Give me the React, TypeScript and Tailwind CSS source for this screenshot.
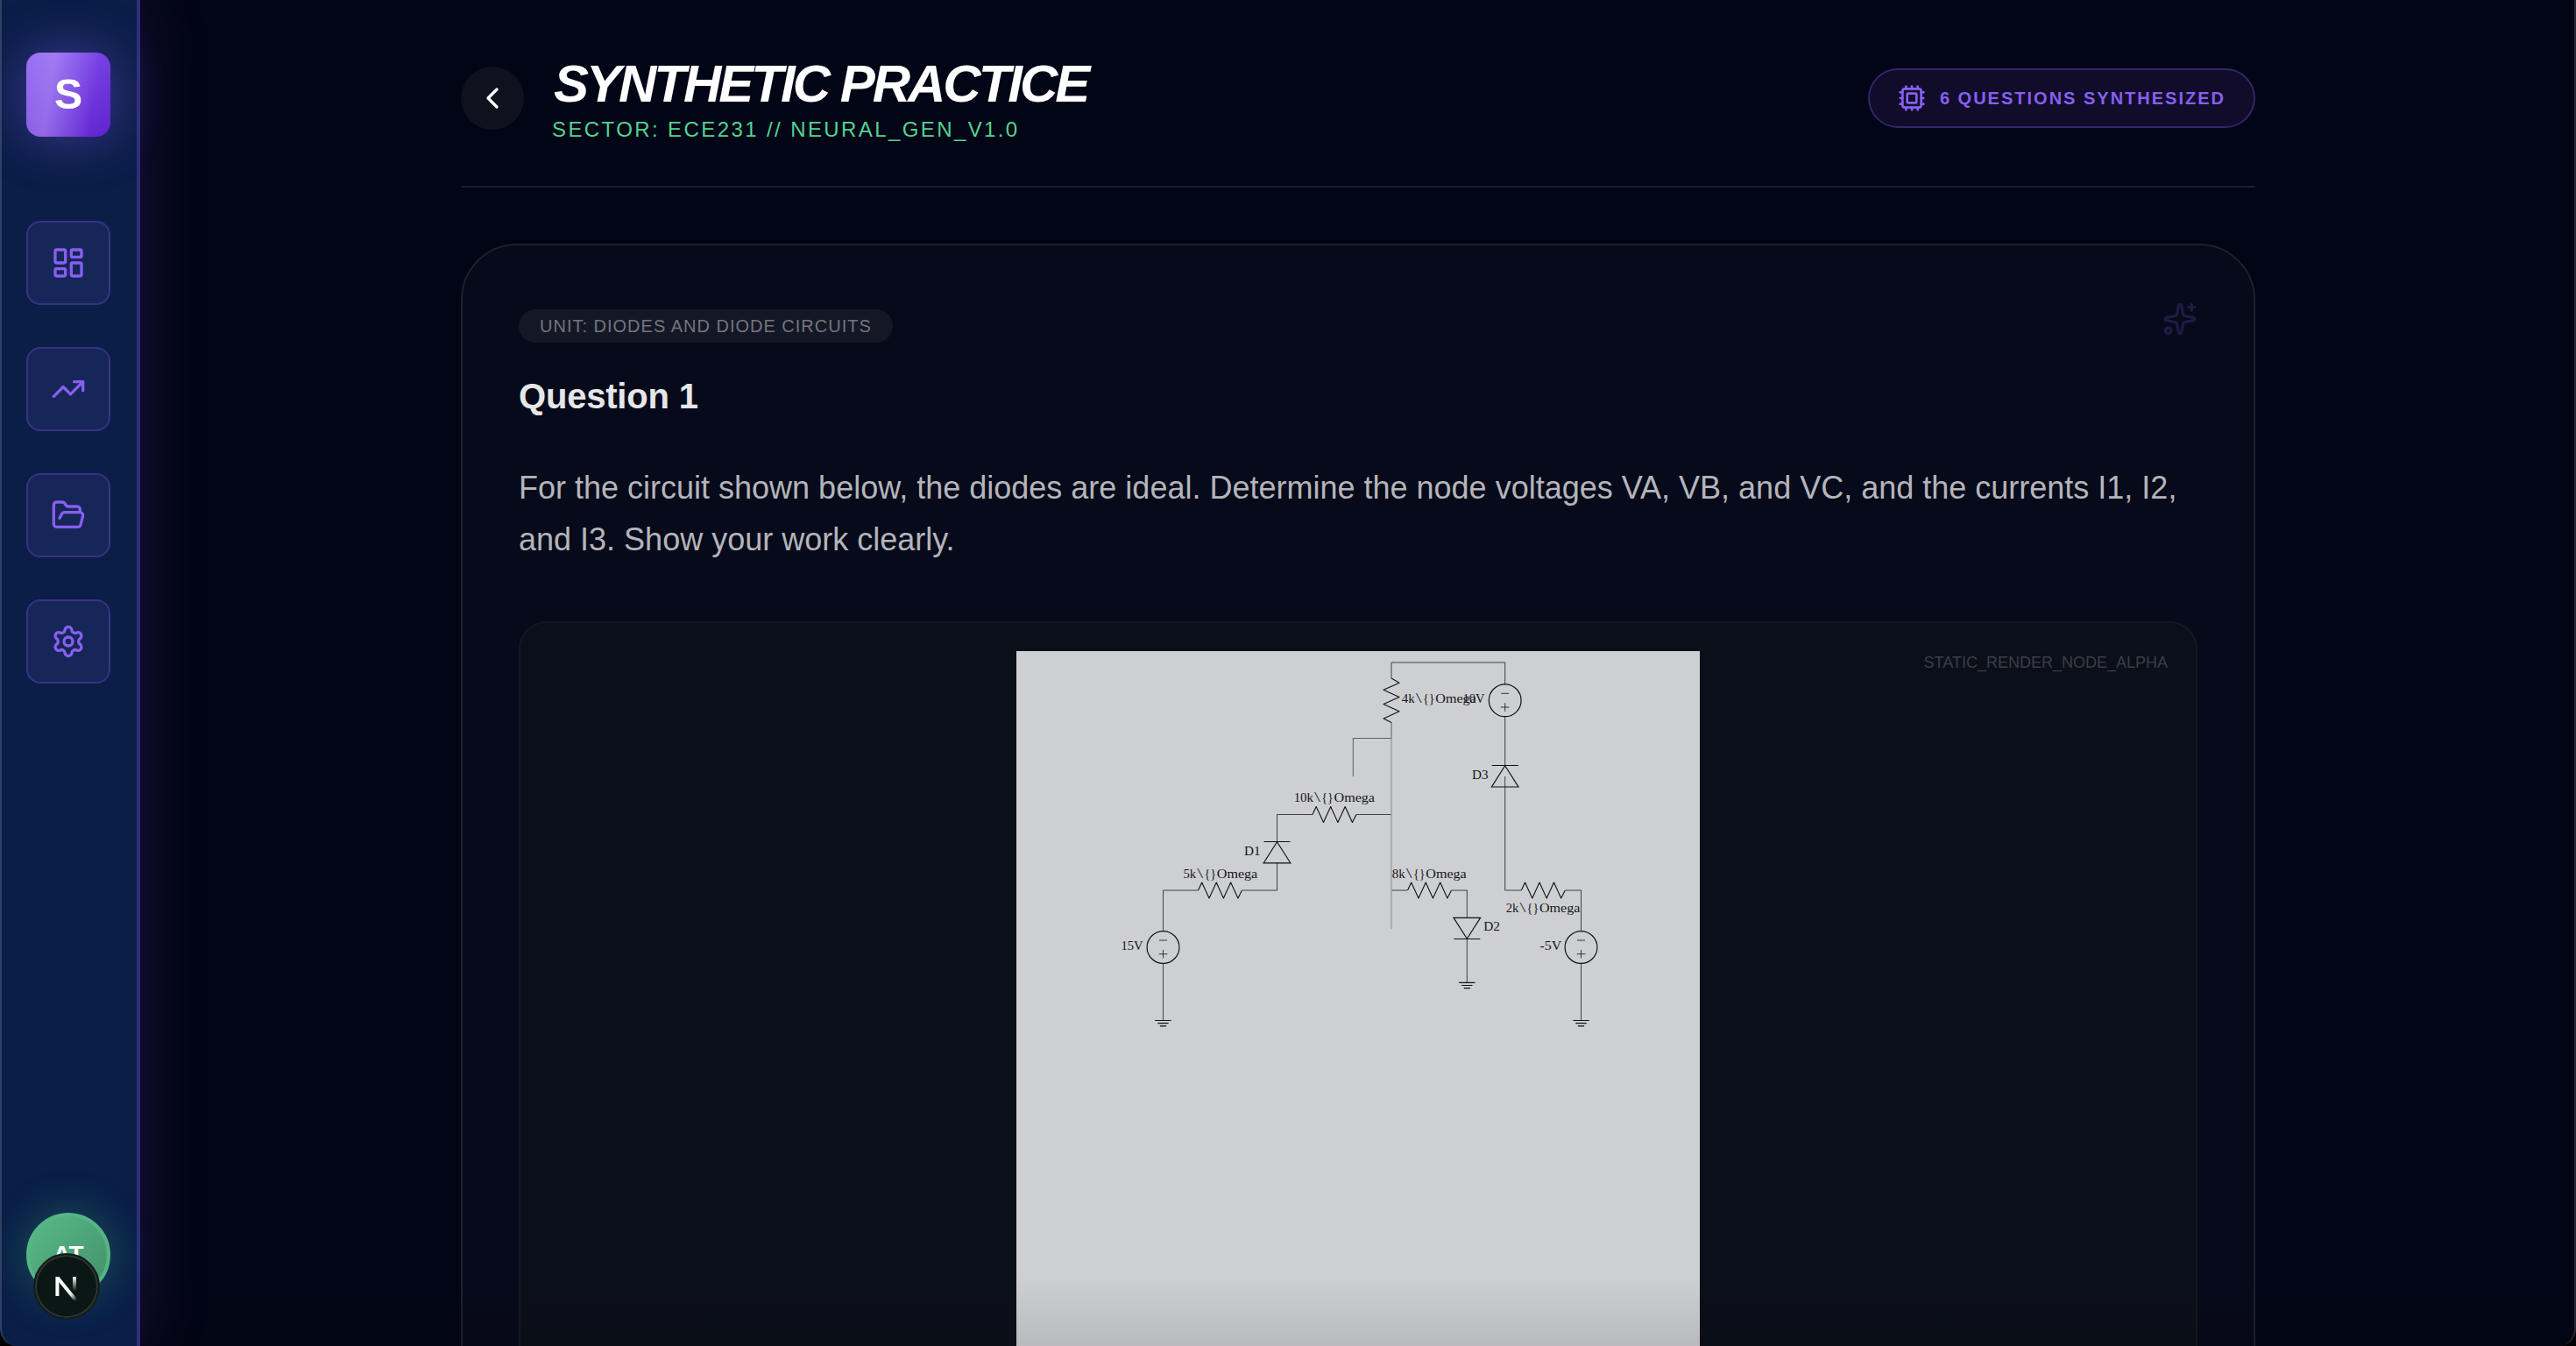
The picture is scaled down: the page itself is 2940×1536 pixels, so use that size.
import React from 'react';
import { ChevronLeft, Cpu, FolderOpen, LayoutDashboard, Settings, Sparkles, TrendingUp } from 'lucide-react';

const navItems = [
  { id: 'dashboard', icon: LayoutDashboard },
  { id: 'progress', icon: TrendingUp },
  { id: 'files', icon: FolderOpen },
  { id: 'settings', icon: Settings },
];

const Sidebar: React.FC = () => (
  <aside className="relative z-10 flex h-full w-40 shrink-0 flex-col items-center border-r-4 border-[#2f2e7d] bg-[#0a1e48] pt-[60px] pb-14 shadow-[0_0_80px_rgba(139,92,246,0.19)]">
    <div className="flex size-24 items-center justify-center rounded-2xl bg-[linear-gradient(98deg,rgba(255,255,255,0.12)_0%,rgba(255,255,255,0.24)_30%,rgba(255,255,255,0)_78%),linear-gradient(135deg,#8b5cf6_0%,#6022cf_100%)] text-5xl font-bold text-white shadow-[0_0_60px_rgba(139,92,246,0.45)]">
      S
    </div>

    <nav className="mt-24 flex flex-col gap-12">
      {navItems.map(({ id, icon: Icon }) => (
        <button key={id} className="flex size-24 items-center justify-center rounded-2xl border-2 border-[#373384] bg-[#162658] text-[#875ff0]">
          <Icon size={40} />
        </button>
      ))}
    </nav>

    <div className="mt-auto flex size-24 items-center justify-center rounded-full border-4 border-[#55b584] bg-[linear-gradient(135deg,#58b988_0%,#429068_100%)] text-[28px] font-bold text-white shadow-[0_0_50px_rgba(74,222,128,0.3)]">
      AT
    </div>
  </aside>
);

const DevBadge: React.FC = () => (
  <div className="absolute bottom-[30px] left-[38px] z-20 flex size-[76px] items-center justify-center rounded-full border-2 border-[#171c1b] bg-[#0b1714] shadow-[inset_0_0_0_2px_#2c3735]">
    <svg width="72" height="72" viewBox="0 0 72 72" fill="none">
      <defs>
        <linearGradient id="badgeDiagonal" x1="37" y1="39" x2="47" y2="52" gradientUnits="userSpaceOnUse">
          <stop stopColor="#fff" />
          <stop offset="0.5" stopColor="#fff" stopOpacity="0.85" />
          <stop offset="1" stopColor="#fff" stopOpacity="0" />
        </linearGradient>
        <linearGradient id="badgeStem" x1="45" y1="25" x2="45" y2="41" gradientUnits="userSpaceOnUse">
          <stop stopColor="#fff" />
          <stop offset="1" stopColor="#fff" stopOpacity="0" />
        </linearGradient>
      </defs>
      <path d="M25.4 25V47" stroke="#fff" strokeWidth="4" />
      <path d="M25.6 26L46.8 52" stroke="url(#badgeDiagonal)" strokeWidth="4" />
      <path d="M45 25V41" stroke="url(#badgeStem)" strokeWidth="4" />
    </svg>
  </div>
);

interface LabelProps {
  x: number;
  y: number;
  width: number;
  children: string;
}

const Label: React.FC<LabelProps> = ({ x, y, width, children }) => (
  <text x={x} y={y} textLength={width} lengthAdjust="spacingAndGlyphs" fill="#161618" fontSize="14.5">
    {children}
  </text>
);

// x is where the unit ends and the unescaped "\{}Omega" begins
const OhmLabel: React.FC<{ x: number; y: number; value: string; width: number }> = ({ x, y, value, width }) => (
  <>
    <Label x={x - width} y={y} width={width}>{value}</Label>
    <text x={x + 1} y={y} fill="#3a3a3d" fontSize="17" textLength="7" lengthAdjust="spacingAndGlyphs">{'\\'}</text>
    <Label x={x + 9.2} y={y} width={13.6}>{'{}'}</Label>
    <Label x={x + 23.6} y={y} width={46.4}>Omega</Label>
  </>
);

const zigzag = 'l4.2 -9 8.3 18 8.2 -18 8.2 18 8.3 -18 8.2 18 4.6 -9';

const Source: React.FC<{ x: number; y: number }> = ({ x, y }) => (
  <g transform={`translate(${x} ${y})`}>
    <circle r="18.4" strokeWidth="1.2" />
    <path d="M-4.5 -8H4.5M-4.8 7.7H4.8M0 2.9V12.5" strokeWidth="0.8" />
  </g>
);

const Ground: React.FC<{ x: number; y: number }> = ({ x, y }) => (
  <path transform={`translate(${x} ${y})`} d="M-9.2 0H9.2M-6.2 3.2H6.2M-3.6 6.3H3.6" strokeWidth="1.2" />
);

const CircuitDiagram: React.FC = () => (
  <svg className="block bg-[#cecfd3]" width="780" height="1009" viewBox="0 0 780 1009" fill="none" stroke="#111113" fontFamily="'Liberation Serif', serif">
    {/* wires */}
    <g strokeWidth="0.75">
      <path d="M167.5 319.5V273H207.5M257.5 273H297.5V241.5M297.5 217.5V186.5H338M388 186.5H428" />
      <path d="M428 31V13H557.7V38M557.7 75V130.5M557.7 143V273H576M626.5 273H644.5V319.5" />
      <path d="M428 273H446M496.5 273H514.3V304M514.3 328.5V378M167.5 356.5V421.5M644.5 356.5V421.5" />
      <path d="M428 81V99.5H384.3V143" strokeWidth="0.6" />
    </g>
    <path d="M428 99.5V317" stroke="#9b9ca0" strokeWidth="1.4" />

    {/* resistors */}
    <g strokeWidth="1.1" strokeLinejoin="round">
      <path d={`M207.5 273${zigzag}`} />
      <path d={`M338 186.5${zigzag}`} />
      <path d={`M446.5 273${zigzag}`} />
      <path d={`M576.3 273${zigzag}`} />
      <path d="M428 31l9 5.2 -18 8.1 18 8.2 -18 8.1 18 8.2 -18 8.1 9 4.6" />
    </g>

    {/* diodes */}
    <g strokeWidth="1.2">
      <path d="M282.5 217.5H312.5M297.5 217.8L282.2 241.8H312.8Z" />
      <path d="M542.7 130.5H572.9M557.7 130.8L542.4 155H573Z" />
      <path d="M499.3 328.5H529.3M514.3 328.2L499 304.3H529.6Z" />
    </g>

    <Source x={167.5} y={338} />
    <Source x={557.7} y={56.3} />
    <Source x={644.5} y={338} />
    <Ground x={167.5} y={421.5} />
    <Ground x={514.3} y={378.3} />
    <Ground x={644.5} y={421.5} />

    <g stroke="none">
      <Label x={119.5} y={340.7} width={25}>15V</Label>
      <OhmLabel x={205.2} y={259} value="5k" width={14.7} />
      <Label x={260} y={232.5} width={18.5}>D1</Label>
      <OhmLabel x={339} y={172.3} value="10k" width={22.3} />
      <OhmLabel x={454.7} y={59.3} value="4k" width={14.9} />
      <Label x={509.5} y={59.3} width={25}>10V</Label>
      <Label x={520} y={146} width={18.5}>D3</Label>
      <OhmLabel x={443.7} y={259} value="8k" width={15} />
      <Label x={533.3} y={319} width={18.7}>D2</Label>
      <OhmLabel x={573.4} y={298.3} value="2k" width={14.7} />
      <Label x={597.5} y={340.7} width={24.7}>-5V</Label>
    </g>
  </svg>
);

const QuestionCard: React.FC = () => (
  <section className="mt-16 rounded-[64px] border-2 border-[#1e202b] bg-[#070a1a] p-16">
    <div className="flex items-start justify-between">
      <span className="mt-[9px] flex h-[38px] items-center rounded-full bg-[#141725] px-6 text-xl tracking-wider text-[#74757d]">
        UNIT: DIODES AND DIODE CIRCUITS
      </span>
      <Sparkles size={40} className="text-[#201a44]" />
    </div>
    <h2 className="mt-[33px] text-[40px] leading-[56px] font-bold tracking-[-0.2px] text-[#e6e6e8]">Question 1</h2>
    <p className="mt-12 text-4xl leading-[58.5px] text-[#b4b5ba]">
      For the circuit shown below, the diodes are ideal. Determine the node voltages VA, VB, and VC, and the currents I1, I2, and I3. Show your work clearly.
    </p>
    <div className="relative mt-16 flex justify-center rounded-[32px] border-2 border-[#141822] bg-[#0b0f19] p-8">
      <CircuitDiagram />
      <span className="absolute top-8 right-8 text-lg leading-[27px] text-[#3b3e47]">STATIC_RENDER_NODE_ALPHA</span>
    </div>
  </section>
);

export default function App() {
  return (
    <div className="relative flex h-screen w-full overflow-hidden bg-[#020515] font-['Liberation_Sans',Arial,sans-serif]">
      <Sidebar />
      <main className="flex h-full flex-1 justify-center overflow-hidden pt-[60px]">
        <div className="w-[2048px]">
          <header className="flex items-center justify-between border-b-2 border-[#1b1e2c] pb-12">
            <div className="flex items-center gap-8">
              <button className="flex size-[72px] items-center justify-center rounded-full bg-[#0f111e] text-white">
                <ChevronLeft size={40} />
              </button>
              <div>
                <h1 className="pl-0.5 text-6xl leading-[72px] font-bold tracking-tighter text-white italic">SYNTHETIC PRACTICE</h1>
                <p className="text-2xl tracking-widest text-[#55d392]">SECTOR: ECE231 // NEURAL_GEN_V1.0</p>
              </div>
            </div>
            <div className="flex h-[68px] items-center gap-4 rounded-full border-2 border-[#33256a] bg-[#110c2a] px-8 text-[#875ff0]">
              <Cpu size={32} />
              <span className="text-xl font-bold tracking-widest">6 QUESTIONS SYNTHESIZED</span>
            </div>
          </header>
          <QuestionCard />
        </div>
      </main>
      <DevBadge />

      {/* bottom fade and window outline */}
      <div className="pointer-events-none absolute inset-x-0 bottom-0 h-20 bg-linear-to-b from-transparent to-black/10" />
      <div className="pointer-events-none absolute inset-0 z-30 rounded-b-[20px] border-x-2 border-white/15 shadow-[0_0_0_20px_#000]" />
    </div>
  );
}
